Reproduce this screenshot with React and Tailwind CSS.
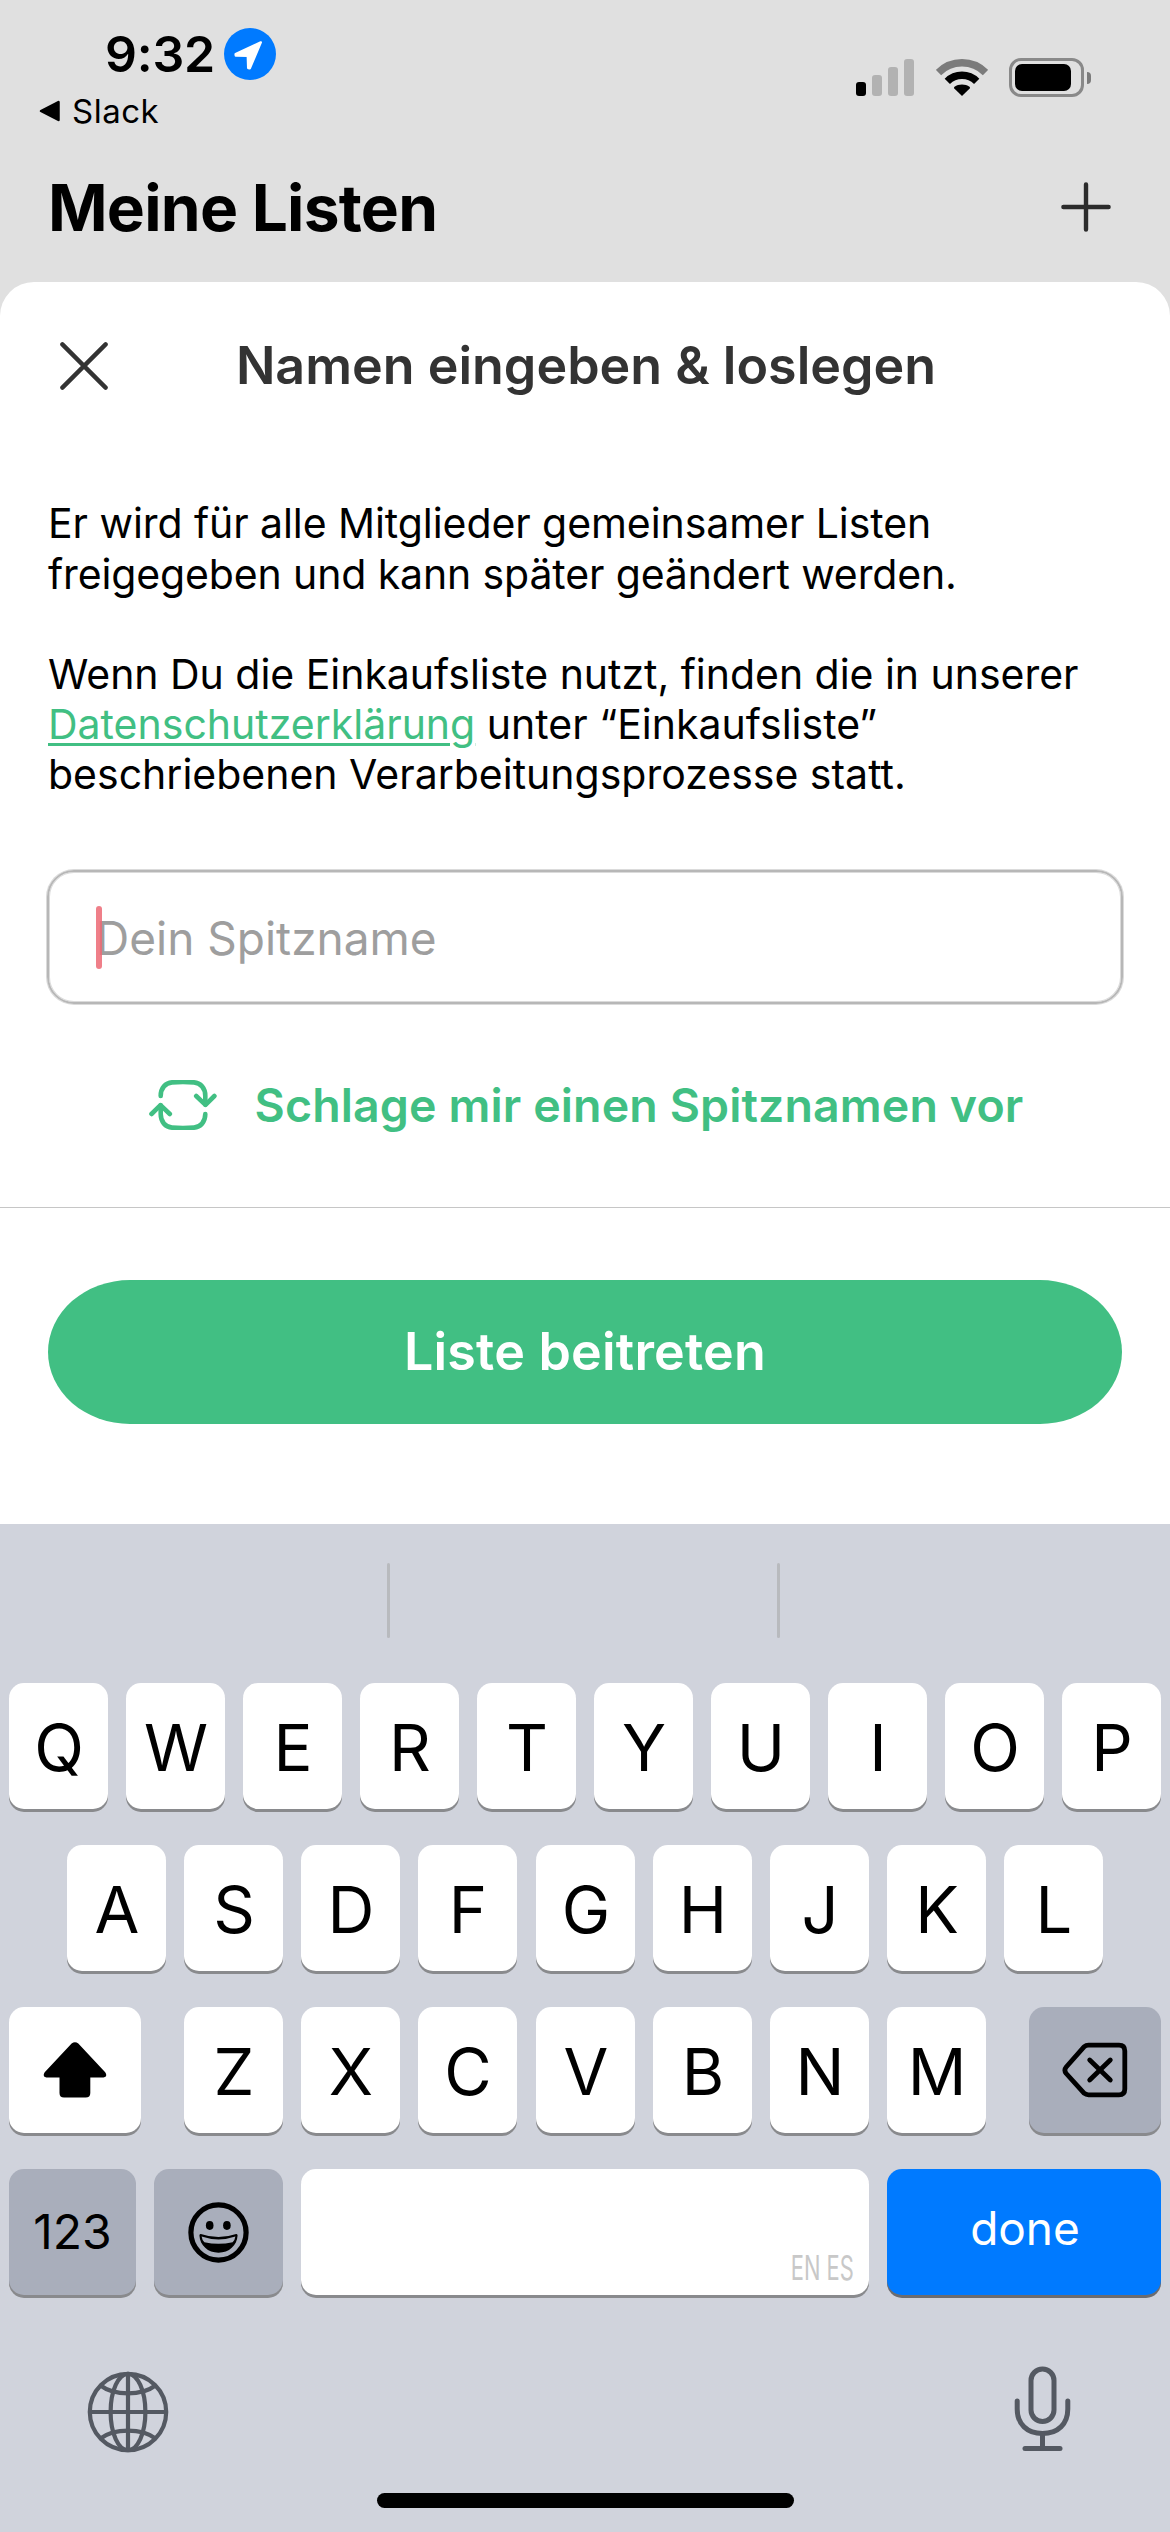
import React from 'react';

const TOP_ROW = ['Q', 'W', 'E', 'R', 'T', 'Y', 'U', 'I', 'O', 'P'];
const HOME_LEFT = ['A', 'S', 'D', 'F'];
const HOME_RIGHT = ['G', 'H', 'J', 'K', 'L'];
const BOTTOM_LEFT = ['Z', 'X', 'C'];
const BOTTOM_RIGHT = ['V', 'B', 'N', 'M'];

const LocationBadge = () => (
  <svg width="52" height="52" viewBox="0 0 52 52">
    <circle cx="26" cy="26" r="26" fill="#007aff" />
    <path
      d="M36.8 14.4 L11.6 26 L11.8 27.6 L23.8 27.9 L24.2 40 L25.8 40.2 Z"
      fill="#fff"
      stroke="#fff"
      strokeWidth="2.4"
      strokeLinejoin="round"
    />
  </svg>
);

const BackTriangle = () => (
  <svg width="21" height="22" viewBox="0 0 21 22">
    <path d="M2 11 L19.5 2 V20 Z" stroke="#000" strokeWidth="2.5" strokeLinejoin="round" />
  </svg>
);

const SignalBars = () => (
  <div className="flex items-end gap-1.5">
    <div className="w-2.5 h-3.5 rounded-[3px] bg-black" />
    <div className="w-2.5 h-[21px] rounded-[3px] bg-[#b2b2b2]" />
    <div className="w-2.5 h-[29px] rounded-[3px] bg-[#b2b2b2]" />
    <div className="w-2.5 h-[37px] rounded-[3px] bg-[#b2b2b2]" />
  </div>
);

const WifiIcon = () => (
  <svg width="52" height="37" viewBox="0 0 52 37" fill="none">
    <path d="M2.5 13.5 A33.2 33.2 0 0 1 49.5 13.5" stroke="#7b7b7b" strokeWidth="7.5" />
    <path d="M11.3 22.3 A20.8 20.8 0 0 1 40.7 22.3" stroke="#000" strokeWidth="7.5" />
    <path d="M26 37 L18.3 29.6 C17.9 29 17.9 28.3 18.5 27.8 C22.6 24.6 29.4 24.6 33.5 27.8 C34.1 28.3 34.1 29 33.7 29.6 Z" fill="#000" />
  </svg>
);

const BatteryIcon = () => (
  <div className="flex items-center gap-[3px]">
    <div className="w-[75px] h-[39px] rounded-[12px] border-[3px] border-[#898989] p-[3px]">
      <div className="w-14 h-[27px] rounded-[7px] bg-black" />
    </div>
    <div className="w-1 h-3 rounded-r-full bg-[#7b7b7b]" />
  </div>
);

const PlusIcon = () => (
  <svg width="50" height="50" viewBox="0 0 50 50" stroke="#2c2c2c" strokeWidth="4.4" strokeLinecap="round">
    <path d="M25 2.4 V47.6 M2.4 25 H47.6" />
  </svg>
);

const CloseIcon = () => (
  <svg width="48" height="48" viewBox="0 0 48 48" stroke="#333" strokeWidth="4.4" strokeLinecap="round">
    <path d="M2.4 2.4 L45.6 45.6 M45.6 2.4 L2.4 45.6" />
  </svg>
);

const ShuffleIcon = () => (
  <svg
    width="68"
    height="50"
    viewBox="0 0 68 50"
    fill="none"
    stroke="#41bf83"
    strokeWidth="4.6"
    strokeLinecap="round"
    strokeLinejoin="round"
  >
    <path d="M11.7 15.9 C11.7 8 16.5 2.9 23 2.4 C30 1.9 38 1.9 45 2.4 C51.5 2.9 56.3 8 56.3 15.9 V24.6" />
    <path d="M47.2 16 L56.5 24.8 L65.4 16" />
    <path d="M56.3 34.1 C56.3 42 51.5 47.1 45 47.6 C38 48.1 30 48.1 23 47.6 C16.5 47.1 11.7 42 11.7 34.1 V25.4" />
    <path d="M2.5 34 L11.5 25.2 L20.8 34" />
  </svg>
);

const ShiftIcon = () => (
  <svg width="64" height="56" viewBox="0 0 64 56">
    <path
      d="M28.6 1.6 Q32 -1.2 35.3 1.6 L62.2 30.2 Q65 34.8 60.5 35.6 H47.3 V51 Q47.3 55.6 42.7 55.6 H21 Q16.5 55.6 16.5 51 V35.6 H3.4 Q-1 34.8 1.7 30.2 Z"
      fill="#000"
    />
  </svg>
);

const DeleteIcon = () => (
  <svg
    width="66"
    height="56"
    viewBox="0 0 66 56"
    fill="none"
    stroke="#000"
    strokeWidth="4.8"
    strokeLinecap="round"
    strokeLinejoin="round"
  >
    <path d="M22 4.8 Q24 3.2 26.5 3.2 H57 Q62.8 3.2 62.8 9 V47 Q62.8 52.8 57 52.8 H26.5 Q24 52.8 22 51.2 L4.2 31.5 Q1.6 28.2 4.2 25 Z" />
    <path d="M27.7 18 L48.3 38 M48.3 18 L27.7 38" />
  </svg>
);

const EmojiIcon = () => (
  <svg width="61" height="61" viewBox="0 0 61 61">
    <circle cx="30.5" cy="30.5" r="27.6" fill="none" stroke="#000" strokeWidth="5.2" />
    <ellipse cx="21.7" cy="23.5" rx="3.8" ry="4.4" />
    <ellipse cx="38.9" cy="23.5" rx="3.8" ry="4.4" />
    <path d="M11.4 33.5 Q11.6 31.6 13.8 32.2 Q30.5 38 47.2 32.2 Q49.4 31.6 49.6 33.5 C49 43.5 41 50.7 30.5 50.7 C20 50.7 12 43.5 11.4 33.5 Z" />
    <path d="M13.6 34.6 Q30.5 40.4 47.4 34.6 Q47 38 44.6 40.2 Q30.5 43.2 16.4 40.2 Q14 38 13.6 34.6 Z" fill="#a9aebb" />
  </svg>
);

const GlobeIcon = () => (
  <svg width="82" height="82" viewBox="0 0 82 82" fill="none" stroke="#545962" strokeWidth="4.2">
    <circle cx="41" cy="41" r="38.2" />
    <ellipse cx="41" cy="41" rx="17.4" ry="38.2" />
    <path d="M41 3 V79 M3 41 H79" />
    <path d="M13.5 14.5 Q24 22.4 41 22.4 Q58 22.4 68.5 14.5" />
    <path d="M13.5 67.5 Q24 59.6 41 59.6 Q58 59.6 68.5 67.5" />
  </svg>
);

const MicIcon = () => (
  <svg width="58" height="86" viewBox="0 0 58 86" fill="none" stroke="#545962" strokeWidth="5" strokeLinecap="round">
    <rect x="17" y="3" width="23" height="52.5" rx="11.5" />
    <path d="M3.2 35 V43 C3.2 58 13 67.5 28.5 67.5 C44 67.5 53.8 58 53.8 43 V35" />
    <path d="M28.5 68 V82" />
    <path d="M11 82.5 H46" />
  </svg>
);

const LetterKey = ({ label }) => (
  <button className="w-[99px] h-[126px] pt-[3px] pl-px flex items-center justify-center rounded-[15px] bg-white shadow-[0_3px_0_#898a8d] text-[65px] leading-none">
    {label}
  </button>
);

const KeyGroup = ({ letters }) => (
  <div className="flex gap-[18px]">
    {letters.map((letter) => (
      <LetterKey key={letter} label={letter} />
    ))}
  </div>
);

const StatusBar = () => (
  <div className="h-[168px] flex justify-between">
    <div className="pt-6">
      <div className="flex items-center h-[60px] pl-[105px]">
        <span className="w-[119px] text-[50px] leading-[60px] font-semibold tracking-[-0.25px]">9:32</span>
        <LocationBadge />
      </div>
      <div className="flex items-center gap-3 mt-[7px] pl-[39px]">
        <BackTriangle />
        <span className="text-[33px] leading-10 tracking-[0.5px]">Slack</span>
      </div>
    </div>
    <div className="flex items-end h-[97px] pr-[79px]">
      <div className="pb-px">
        <SignalBars />
      </div>
      <div className="ml-[22px] pb-px">
        <WifiIcon />
      </div>
      <div className="ml-[21px]">
        <BatteryIcon />
      </div>
    </div>
  </div>
);

const NicknameSheet = () => (
  <section className="h-[1242px] rounded-t-[34px] bg-white">
    <div className="relative pt-[52px]">
      <button className="absolute left-[60px] top-[60px]">
        <CloseIcon />
      </button>
      <h2 className="pl-0.5 text-center text-[52px] leading-[64px] font-semibold text-[#333]">
        Namen eingeben &amp; loslegen
      </h2>
    </div>

    <div className="mt-[100px] px-12 text-[41px] whitespace-nowrap">
      <p className="leading-[51px]">
        <span className="tracking-[-0.07px]">Er wird für alle Mitglieder gemeinsamer Listen</span>
        <br />
        <span className="tracking-[-0.13px]">freigegeben und kann später geändert werden.</span>
      </p>
      <p className="mt-[49px] leading-[50px]">
        <span className="tracking-[-0.03px]">Wenn Du die Einkaufsliste nutzt, finden die in unserer</span>
        <br />
        <a href="#" className="text-[#41bf83] underline decoration-[3px] underline-offset-[4px]">
          Datenschutzerklärung
        </a>{' '}
        unter “Einkaufsliste”
        <br />
        beschriebenen Verarbeitungsprozesse statt.
      </p>
    </div>

    <div className="relative mt-[71px] mx-[47px] h-[134px] flex items-center rounded-[27px] border-2 border-[#b7b7b7] shadow-[0_0_0_1px_#dbdbdb,inset_0_0_0_1px_#dbdbdb] pl-[47px] pt-0.5">
      <span className="text-[46px] leading-none text-[#9e9e9e]">Dein Spitzname</span>
      <div className="absolute left-[47px] top-[34px] w-1.5 h-[63px] rounded-full bg-[#ec6874]/85" />
    </div>

    <button className="w-full h-[60px] mt-[71px] pl-0.5 flex items-center justify-center gap-[38px] text-[#41bf83]">
      <ShuffleIcon />
      <span className="text-[46.5px] leading-[60px] font-semibold tracking-[0.12px]">Schlage mir einen Spitznamen vor</span>
    </button>

    <div className="mt-[72px] h-px bg-[#c6c6c6]" />

    <div className="px-12 pt-[72px]">
      <button className="w-full h-36 rounded-[82px/72px] bg-[#41bf83] text-white text-[52px] leading-none font-semibold tracking-[0.2px]">
        Liste beitreten
      </button>
    </div>
  </section>
);

const Keyboard = () => (
  <section className="h-[1008px] pt-[39px] bg-[#d0d3dc]">
    <div className="flex gap-[387px] pl-[387px] h-[75px]">
      <div className="w-[3px] rounded-full bg-[#b8babe]" />
      <div className="w-[3px] rounded-full bg-[#b8babe]" />
    </div>

    <div className="mt-[45px] px-[9px] flex flex-col gap-9">
      <KeyGroup letters={TOP_ROW} />

      <div className="flex gap-[19px] pl-[58px]">
        <KeyGroup letters={HOME_LEFT} />
        <KeyGroup letters={HOME_RIGHT} />
      </div>

      <div className="flex justify-between">
        <button className="w-[132px] h-[126px] flex items-center justify-center rounded-[15px] bg-white shadow-[0_3px_0_#898a8d]">
          <ShiftIcon />
        </button>
        <div className="flex gap-[19px]">
          <KeyGroup letters={BOTTOM_LEFT} />
          <KeyGroup letters={BOTTOM_RIGHT} />
        </div>
        <button className="w-[132px] h-[126px] flex items-center justify-center rounded-[15px] bg-[#a9aebb] shadow-[0_3px_0_#898a8d]">
          <DeleteIcon />
        </button>
      </div>

      <div className="flex gap-[18px] h-[126px]">
        <button className="w-[127px] rounded-[15px] bg-[#a9aebb] shadow-[0_3px_0_#898a8d] text-[48px] leading-none">
          123
        </button>
        <button className="w-[129px] flex items-center justify-center rounded-[15px] bg-[#a9aebb] shadow-[0_3px_0_#898a8d]">
          <EmojiIcon />
        </button>
        <button className="w-[568px] flex items-end justify-end pr-[15px] pb-2.5 rounded-[15px] bg-white shadow-[0_3px_0_#898a8d]">
          <span className="origin-right scale-x-[0.645] text-[34px] leading-none text-[#c8c8c8]">EN ES</span>
        </button>
        <button className="w-[274px] pb-2 pl-0.5 rounded-[15px] bg-[#007aff] shadow-[0_3px_0_#6b6c70] text-white text-[46px] leading-none">
          done
        </button>
      </div>
    </div>

    <div className="flex justify-between mt-[71px] pl-[87px] pr-[98px]">
      <div className="pt-[5px]">
        <GlobeIcon />
      </div>
      <MicIcon />
    </div>

    <div className="mt-[40px] mx-auto w-[417px] h-[15px] rounded-full bg-black" />
  </section>
);

export default function App() {
  return (
    <div className="w-[1170px] h-[2532px] overflow-hidden bg-[#e0e0e0] text-black font-['Inter',sans-serif]">
      <StatusBar />
      <header className="h-[114px] flex items-start justify-between pl-12 pr-[59px]">
        <h1 className="text-[64px] leading-[80px] font-bold tracking-[-0.76px]">Meine Listen</h1>
        <button className="pt-3.5">
          <PlusIcon />
        </button>
      </header>
      <NicknameSheet />
      <Keyboard />
    </div>
  );
}
